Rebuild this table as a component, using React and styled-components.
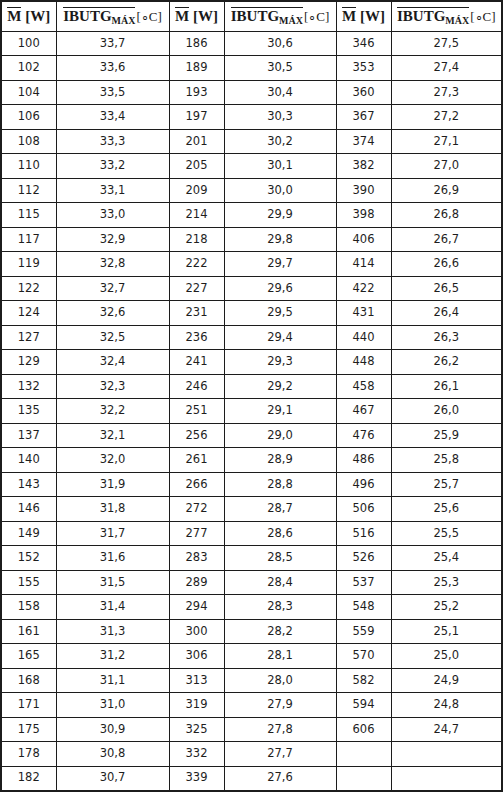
import React from "react";
import styled, { createGlobalStyle } from "styled-components";

const Global = createGlobalStyle`
  html, body { margin: 0; padding: 0; background: #fff; }
  body { font-family: "DejaVu Sans", Verdana, sans-serif; }
`;

const Table = styled.table`
  border-collapse: collapse;
  width: 501px;
  table-layout: fixed;
  margin: 0;
  border: 2px solid #1c1c1c;
`;

const Col = styled.col`
  width: ${(p) => p.$w}px;
`;

const HeadRow = styled.tr`
  height: 30px;
`;

const Row = styled.tr`
  height: 24.5px;
`;

const Th = styled.th`
  border: 1.5px solid #1c1c1c;
  padding: 0;
  font-family: "Liberation Serif", "Times New Roman", serif;
  font-weight: 700;
  font-size: 15px;
  color: #1a1a1a;
  text-align: center;
  vertical-align: middle;
  white-space: nowrap;
`;

const Td = styled.td`
  border: 1.5px solid #1c1c1c;
  padding: 0;
  font-family: "DejaVu Sans", Verdana, sans-serif;
  font-size: 11.5px;
  color: #1e1e1e;
  text-align: center;
  vertical-align: middle;
  line-height: 1;
`;

const Bar = styled.span`
  display: inline-block;
  border-top: 1.2px solid #1a1a1a;
  line-height: 1.05;
  padding-top: 1px;
`;

const Sub = styled.sub`
  font-size: 10px;
  vertical-align: -3px;
  line-height: 0;
`;

const Unit = styled.span`
  font-weight: 400;
  font-size: 13px;
  margin-left: 1px;
`;

const MHead = () => (
  <Th>
    <Bar>M</Bar> [W]
  </Th>
);

const IHead = () => (
  <Th>
    <Bar>
      IBUTG<Sub>MÁX</Sub>
    </Bar>
    <Unit>[∘C]</Unit>
  </Th>
);

const m1 = [100,102,104,106,108,110,112,115,117,119,122,124,127,129,132,135,137,140,143,146,149,152,155,158,161,165,168,171,175,178,182];
const m2 = [186,189,193,197,201,205,209,214,218,222,227,231,236,241,246,251,256,261,266,272,277,283,289,294,300,306,313,319,325,332,339];
const m3 = [346,353,360,367,374,382,390,398,406,414,422,431,440,448,458,467,476,486,496,506,516,526,537,548,559,570,582,594,606];

const fmt = (v) => v.toFixed(1).replace(".", ",");
const series = (start, n) => Array.from({ length: n }, (_, i) => fmt(Math.round((start - i * 0.1) * 10) / 10));

const i1 = series(33.7, 31);
const i2 = series(30.6, 31);
const i3 = series(27.5, 29);

export default function App() {
  return (
    <>
      <Global />
      <Table>
        <colgroup>
          <Col $w={55} />
          <Col $w={113} />
          <Col $w={55} />
          <Col $w={112} />
          <Col $w={55} />
          <Col $w={111} />
        </colgroup>
        <thead>
          <HeadRow>
            <MHead />
            <IHead />
            <MHead />
            <IHead />
            <MHead />
            <IHead />
          </HeadRow>
        </thead>
        <tbody>
          {m1.map((v, i) => (
            <Row key={v}>
              <Td>{v}</Td>
              <Td>{i1[i]}</Td>
              <Td>{m2[i]}</Td>
              <Td>{i2[i]}</Td>
              <Td>{m3[i] ?? ""}</Td>
              <Td>{i3[i] ?? ""}</Td>
            </Row>
          ))}
        </tbody>
      </Table>
    </>
  );
}
